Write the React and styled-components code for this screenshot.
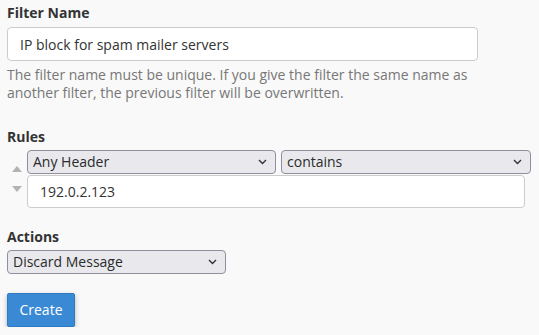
import React from "react";
import styled, { createGlobalStyle } from "styled-components";

const Global = createGlobalStyle`
  html, body { margin: 0; padding: 0; background: #f9f9f9; }
  body { font-family: "Open Sans", "Liberation Sans", sans-serif; font-size: 14px; color: #333; }
`;

const Page = styled.div`
  padding: 3px 7px 0 7px;
`;

const Group = styled.div`
  display: flex;
  flex-direction: column;
  margin-bottom: ${(p) => p.$mb || 0}px;
`;

const Label = styled.label`
  font-weight: 700;
  line-height: 20px;
  color: #333;
  margin-bottom: ${(p) => p.$mb || 4}px;
`;

const TextInput = styled.input`
  box-sizing: border-box;
  width: ${(p) => p.$w}px;
  height: ${(p) => p.$h || 34}px;
  border: 1px solid #ccc;
  border-radius: 4px;
  background: #fff;
  padding: 0 12px;
  font: inherit;
  font-size: 14px;
  color: #333;
  outline: none;
`;

const Help = styled.p`
  margin: 5px 0 0 0;
  line-height: 18.3px;
  color: #777;
  width: 480px;
`;

const SelectWrap = styled.div`
  position: relative;
  width: ${(p) => p.$w}px;
  flex: none;
`;

const Select = styled.select`
  box-sizing: border-box;
  appearance: none;
  -webkit-appearance: none;
  width: 100%;
  height: 24px;
  border: 1px solid #8f8f9d;
  border-radius: 4px;
  background: #e9e9ed;
  padding: 0 20px 0 5px;
  font: inherit;
  font-size: 14px;
  color: #2b2b2b;
  outline: none;
`;

const Chevron = styled.svg`
  position: absolute;
  right: 9px;
  top: 9px;
  pointer-events: none;
`;

const RuleRow = styled.div`
  display: flex;
  align-items: flex-start;
`;

const Mover = styled.div`
  width: 20px;
  flex: none;
  display: flex;
  flex-direction: column;
  align-items: center;
  padding-top: 16px;
  gap: 14px;
`;

const RuleFields = styled.div`
  display: flex;
  flex-direction: column;
  gap: 1px;
`;

const SelectRow = styled.div`
  display: flex;
  gap: 5px;
`;

const Button = styled.button`
  box-sizing: border-box;
  width: 68px;
  height: 34px;
  border: 1px solid #2f7bc4;
  border-radius: 2px;
  background: #3a89d4;
  color: #fff;
  font: inherit;
  font-size: 14px;
  box-shadow: 0 2px 5px rgba(0, 0, 0, 0.28);
  padding: 0;
  cursor: pointer;
`;

const Arrow = ({ up }) => (
  <svg width="10" height="6" viewBox="0 0 10 6">
    <polygon points={up ? "0,6 5,0 10,6" : "0,0 10,0 5,6"} fill="#b3b3b3" />
  </svg>
);

const Dropdown = ({ w, value, options }) => (
  <SelectWrap $w={w}>
    <Select defaultValue={value}>
      {options.map((o) => (
        <option key={o}>{o}</option>
      ))}
    </Select>
    <Chevron width="9" height="6" viewBox="0 0 9 6">
      <polyline points="1,1 4.5,4.5 8,1" fill="none" stroke="#333" strokeWidth="1.4" />
    </Chevron>
  </SelectWrap>
);

export default function App() {
  return (
    <>
      <Global />
      <Page>
        <Group $mb={24}>
          <Label>Filter Name</Label>
          <TextInput $w={471} defaultValue="IP block for spam mailer servers" />
          <Help>
            The filter name must be unique. If you give the filter the same name as
            another filter, the previous filter will be overwritten.
          </Help>
        </Group>
        <Group $mb={19}>
          <Label $mb={3}>Rules</Label>
          <RuleRow>
            <Mover>
              <Arrow up />
              <Arrow />
            </Mover>
            <RuleFields>
              <SelectRow>
                <Dropdown w={249} value="Any Header" options={["Any Header", "From", "Subject", "To"]} />
                <Dropdown w={250} value="contains" options={["contains", "matches regex", "does not contain"]} />
              </SelectRow>
              <TextInput $w={498} $h={33} defaultValue="192.0.2.123" />
            </RuleFields>
          </RuleRow>
        </Group>
        <Group $mb={19}>
          <Label $mb={3}>Actions</Label>
          <Dropdown w={219} value="Discard Message" options={["Discard Message", "Redirect to Email", "Fail with Message"]} />
        </Group>
        <Button>Create</Button>
      </Page>
    </>
  );
}
